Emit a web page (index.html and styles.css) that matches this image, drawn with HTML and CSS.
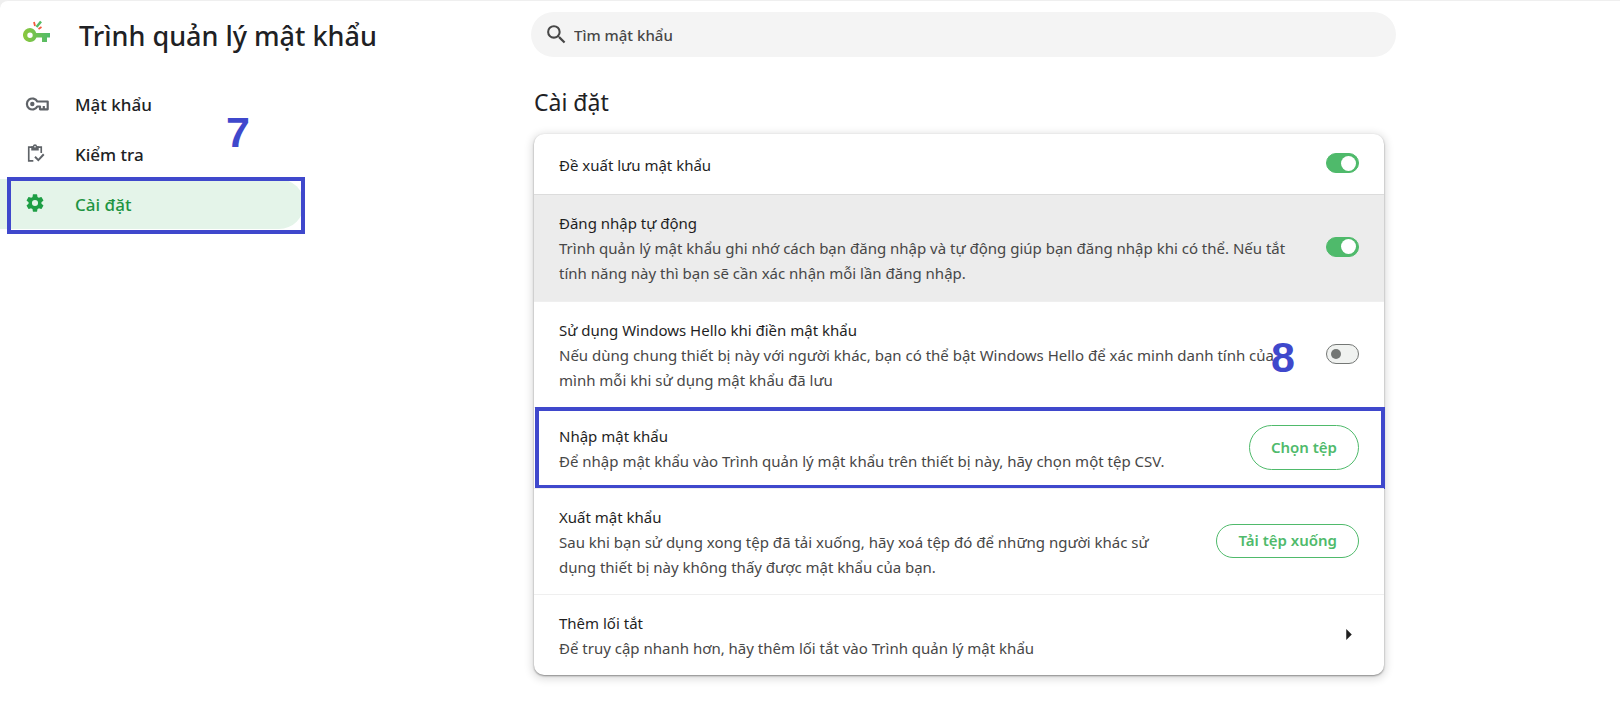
FILE: index.html
```html
<!DOCTYPE html>
<html lang="vi">
<head>
<meta charset="utf-8">
<title>Trình quản lý mật khẩu</title>
<link rel="stylesheet" href="styles.css">
</head>
<body>
<div class="page">
  <aside class="sidebar">
    <header class="brand">
      <svg class="brand-logo" viewBox="0 0 28 24" aria-hidden="true">
        <defs><linearGradient id="key" x1="0" x2="1"><stop offset="0" stop-color="#8cc83c"/><stop offset="1" stop-color="#4fba6b"/></linearGradient></defs>
        <path fill="url(#key)" fill-rule="evenodd" d="M7 8a7 7 0 1 0 6.500 9.500H19V22h5v-4.500h3V13H13.200A7 7 0 0 0 7 8Zm0 4.500a2.700 2.700 0 1 1 0 5.400 2.700 2.700 0 0 1 0-5.400Z"/>
        <path d="m13.500 7 4.500-5.500" stroke="#55bb64" stroke-width="2.500"/>
        <path d="m12 6-1-4M15.500 9l3-2" stroke="#f25b3d" stroke-width="1.800"/>
      </svg>
      <h1 class="brand-title">Trình quản lý mật khẩu</h1>
    </header>
    <nav class="menu">
      <a class="menu-item" href="#passwords">
        <svg class="menu-icon menu-icon-key" viewBox="0 0 24 24" aria-hidden="true"><g fill="none" stroke="#5f6368" stroke-width="2.200"><path d="M12.300 9.500A5.500 5.500 0 1 0 12.300 14.500H15V17.300H22.700V9.500Z" stroke-linejoin="round"/><path d="M18.800 17v-3"/></g><circle cx="7.300" cy="12" r="2.200" fill="#5f6368"/></svg>
        <span>Mật khẩu</span>
      </a>
      <a class="menu-item" href="#checkup">
        <svg class="menu-icon" viewBox="0 0 24 24" aria-hidden="true"><path d="M10 21.500H4.500V5h15v7" fill="none" stroke="#5f6368" stroke-width="2"/><path d="M7.500 4h2a2.500 2.500 0 0 1 5 0h2v5h-9Z" fill="#5f6368"/><circle cx="12" cy="4.500" r="1" fill="#fff"/><path d="m12 16.500 4 4 6.500-7" fill="none" stroke="#5f6368" stroke-width="2.400"/></svg>
        <span>Kiểm tra</span>
      </a>
      <a class="menu-item is-active" href="#settings" aria-current="page">
        <svg class="menu-icon" viewBox="2 2 20 20" aria-hidden="true"><path fill="#1e9e45" d="M19.140 12.940c.04-.3.060-.61.060-.94 0-.32-.02-.64-.07-.94l2.030-1.580a.49.490 0 0 0 .12-.61l-1.920-3.320a.488.488 0 0 0-.59-.22l-2.390.96c-.5-.38-1.030-.7-1.620-.94l-.36-2.540a.484.484 0 0 0-.48-.41h-3.840c-.24 0-.43.170-.47.410l-.36 2.540c-.59.240-1.130.570-1.620.940l-2.390-.96c-.22-.08-.47 0-.59.220L2.740 8.870c-.12.210-.08.470.120.610l2.030 1.580c-.05.300-.09.630-.09.940s.02.640.070.940l-2.030 1.580a.49.490 0 0 0-.12.610l1.920 3.320c.12.220.370.290.590.220l2.390-.96c.5.380 1.030.7 1.620.940l.36 2.540c.05.240.240.410.480.410h3.840c.24 0 .44-.17.470-.41l.36-2.540c.59-.24 1.130-.56 1.620-.94l2.390.960c.22.080.470 0 .59-.22l1.920-3.320c.12-.22.070-.47-.12-.61l-2.010-1.580zM12 15.400a3.400 3.400 0 1 1 0-6.800 3.400 3.400 0 0 1 0 6.800z"/></svg>
        <span>Cài đặt</span>
      </a>
      <div class="highlight menu-highlight"></div>
      <span class="step step-seven">7</span>
    </nav>
  </aside>
  <main class="content">
    <label class="search">
      <svg class="search-icon" viewBox="0 0 24 24" aria-hidden="true"><path fill="#474747" d="M15.500 14h-.79l-.28-.27A6.471 6.471 0 0 0 16 9.500 6.500 6.500 0 1 0 9.500 16c1.610 0 3.090-.59 4.230-1.570l.27.280v.79l5 4.990L20.490 19l-4.990-5zm-6 0C7.010 14 5 11.990 5 9.500S7.010 5 9.500 5 14 7.010 14 9.500 11.990 14 9.500 14z"/></svg>
      <input class="search-input" type="search" placeholder="Tìm mật khẩu" aria-label="Tìm mật khẩu">
    </label>
    <h2 class="section-title">Cài đặt</h2>
    <section class="card">
      <div class="row row-single">
        <label class="row-text" for="save"><span class="row-title">Đề xuất lưu mật khẩu</span></label>
        <input class="toggle" id="save" type="checkbox" role="switch" checked>
      </div>
      <div class="row row-hover">
        <label class="row-text" for="auto"><span class="row-title">Đăng nhập tự động</span><span class="row-desc">Trình quản lý mật khẩu ghi nhớ cách bạn đăng nhập và tự động giúp bạn đăng nhập khi có thể. Nếu tắt tính năng này thì bạn sẽ cần xác nhận mỗi lần đăng nhập.</span></label>
        <input class="toggle" id="auto" type="checkbox" role="switch" checked>
      </div>
      <div class="row">
        <label class="row-text" for="hello"><span class="row-title">Sử dụng Windows Hello khi điền mật khẩu</span><span class="row-desc">Nếu dùng chung thiết bị này với người khác, bạn có thể bật Windows Hello để xác minh danh tính của mình mỗi khi sử dụng mật khẩu đã lưu</span></label>
        <input class="toggle" id="hello" type="checkbox" role="switch">
        <span class="step step-eight">8</span>
      </div>
      <div class="row">
        <div class="row-text"><span class="row-title">Nhập mật khẩu</span><span class="row-desc">Để nhập mật khẩu vào Trình quản lý mật khẩu trên thiết bị này, hãy chọn một tệp CSV.</span></div>
        <button class="button button-tall" type="button">Chọn tệp</button>
        <div class="highlight row-highlight"></div>
      </div>
      <div class="row">
        <div class="row-text row-text-export"><span class="row-title">Xuất mật khẩu</span><span class="row-desc">Sau khi bạn sử dụng xong tệp đã tải xuống, hãy xoá tệp đó để những người khác sử dụng thiết bị này không thấy được mật khẩu của bạn.</span></div>
        <button class="button" type="button">Tải tệp xuống</button>
      </div>
      <div class="row">
        <div class="row-text"><span class="row-title">Thêm lối tắt</span><span class="row-desc">Để truy cập nhanh hơn, hãy thêm lối tắt vào Trình quản lý mật khẩu</span></div>
        <button class="arrow" type="button" aria-label="Thêm lối tắt"><svg class="arrow-icon" viewBox="0 0 6 12" aria-hidden="true"><path d="M0 0v12l6-6Z" fill="#1f1f1f"/></svg></button>
      </div>
    </section>
  </main>
</div>
</body>
</html>
```
FILE: styles.css
```css
* { box-sizing: border-box; }
body {
  margin: 0;
  background: #efefef;
  color: #202124;
  font-family: "Noto Sans", "Open Sans", sans-serif;
  font-size: 15px;
  line-height: 25px;
}
.page {
  display: grid;
  grid-template-columns: 531px minmax(0, 865px);
  min-height: 100vh;
  border-top: 1px solid #efefef;
  border-top-left-radius: 8px;
  background: #fff;
}
.brand {
  display: flex;
  align-items: center;
  gap: 28px;
  height: 70px;
  padding-left: 23px;
}
.brand-logo { width: 28px; height: 24px; margin-bottom: 8px; }
.brand-title { margin: 0; font-size: 27px; font-weight: 500; line-height: 40px; white-space: nowrap; }
.menu { position: relative; width: 304px; padding-top: 8px; }
.menu-item {
  display: flex;
  align-items: center;
  gap: 28px;
  height: 50px;
  padding-left: 25px;
  border-radius: 0 25px 25px 0;
  color: #202124;
  font-size: 17px;
  font-weight: 500;
  text-decoration: none;
}
.menu-icon { width: 20px; height: 20px; margin: 0 2px 3px 0; }
.menu-icon-key { width: 24px; height: 24px; margin: 0 -2px 0 0; }
.is-active { background: #e4f4e9; color: #1e9443; }
.is-active .menu-icon { padding: 1px; }
.highlight { position: absolute; border: 4px solid #3f48cc; pointer-events: none; }
.menu-highlight { left: 7px; right: -1px; top: 106px; height: 57px; }
.step {
  position: absolute;
  color: #3f48cc;
  font-family: "Liberation Sans", Arial, sans-serif;
  font-size: 43px;
  font-weight: 700;
  line-height: 48px;
}
.step-seven { left: 226px; top: 37px; }
.step-eight { right: 89px; top: 31px; }
.content { padding-top: 11px; }
.search {
  display: flex;
  align-items: center;
  gap: 5px;
  height: 45px;
  padding: 0 24px 0 13px;
  border-radius: 23px;
  background: #f4f4f4;
}
.search-icon { width: 25px; height: 25px; }
.search-input {
  flex: 1;
  padding: 2px 0 0;
  border: 0;
  outline: 0;
  background: none;
  color: #474747;
  font: inherit;
  font-weight: 500;
}
.search-input::placeholder { color: #474747; opacity: 1; }
.section-title { margin: 28px 3px 14px; font-size: 23px; font-weight: 400; line-height: 35px; }
.card {
  margin: 0 12px 32px 3px;
  border-radius: 10px;
  background: #fff;
  box-shadow: 0 1px 2px rgba(0, 0, 0, .4), 0 2px 8px 2px rgba(0, 0, 0, .14);
}
.row {
  position: relative;
  display: flex;
  align-items: center;
  gap: 25px;
  padding: 12px 25px 14px;
  border-top: 1px solid #efefef;
}
.row-single { min-height: 60px; border-top: 0; }
.row-hover { padding-bottom: 15px; background: #ececec; border-color: #dcdcdc; }
.row-text { flex: 1; min-width: 0; padding-top: 4px; }
.row-text-export { padding-right: 26px; }
.row-title, .row-desc { display: block; }
.row-title { color: #1f1f1f; }
.row-desc { color: #474747; }
.toggle {
  appearance: none;
  display: flex;
  align-items: center;
  width: 33px;
  height: 20px;
  margin: 0;
  padding: 0 4px;
  border: 1px solid #747775;
  border-radius: 10px;
  background: #f0f2f0;
}
.toggle::before { content: ""; width: 10px; height: 10px; border-radius: 50%; background: #747775; }
.toggle:checked { justify-content: flex-end; padding: 0 2px; border-color: #4fba6b; background: #4fba6b; }
.toggle:checked::before { width: 15px; height: 15px; background: #fff; }
.button {
  padding: 3px 21px;
  border: 1px solid #4fba6b;
  border-radius: 23px;
  background: #fff;
  color: #4fba6b;
  font: inherit;
  font-weight: 600;
  min-height: 34px;
}
.button-tall { min-height: 45px; }
.row-highlight { left: 1px; right: -1px; top: -1px; bottom: -1px; }
.arrow { display: flex; padding: 4px 7px; border: 0; background: none; }
.arrow-icon { width: 6px; height: 11px; }
```
